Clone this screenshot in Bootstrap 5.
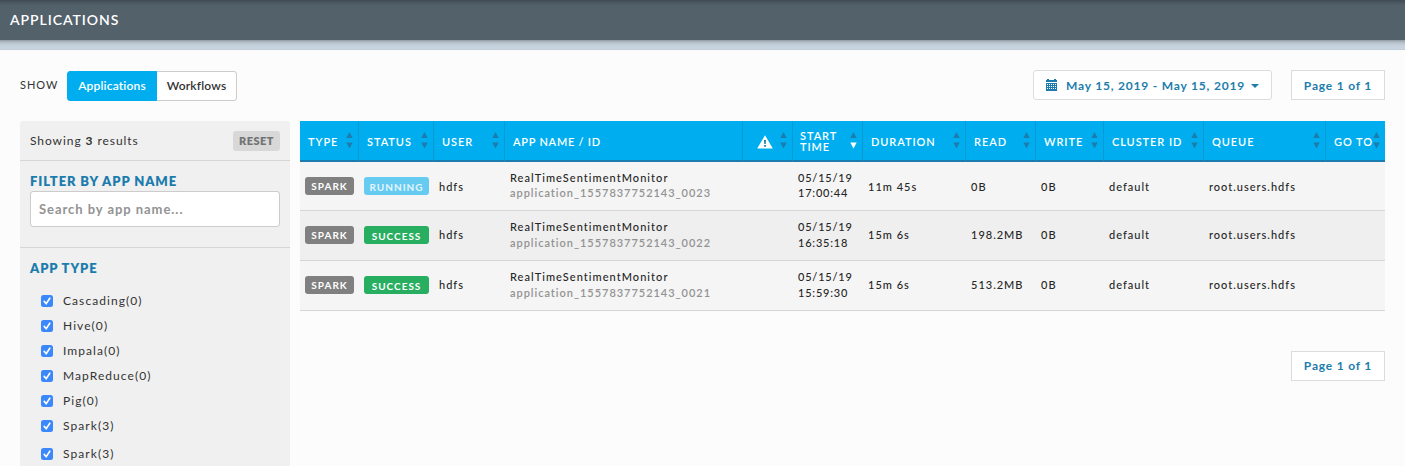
<!DOCTYPE html>
<html lang="en">
<head>
<meta charset="utf-8">
<title>Applications</title>
<meta name="viewport" content="width=device-width, initial-scale=1">
<link href="https://cdn.jsdelivr.net/npm/bootstrap@5.3.0/dist/css/bootstrap.min.css" rel="stylesheet">
<style>
html,body{height:100%;overflow:hidden}
body{font-family:Lato,"Open Sans",sans-serif;font-size:12px;letter-spacing:1px;line-height:15px;color:#333;background:#fcfcfc}
.topbar{height:40px;padding:0 10px 1px;background:linear-gradient(#3e4b54,#4c5963 3px,#53616b 6px);color:#fff;font-size:14px;font-weight:600;letter-spacing:.95px}
.substrip{height:10px;background:linear-gradient(#929ca4,#b4bfc8 25%,#c3d0db 50%,#c9d6e1 85%,#bccad6)}
.toolbar{height:71px;padding:20px 20px 0}
.show-label{font-size:11px;width:47px;line-height:30px}
.seg{margin-top:1px}
.seg .btn{height:30px;font-size:12px;font-weight:600;letter-spacing:.18px;line-height:28px;padding:0 8px;border-radius:3px;border:1px solid #ccc;color:#333;background:#fff}
.seg .btn.active{background:#00aeef;border-color:#00aeef;color:#fff;width:90px}
.seg .btn:last-child{width:81px}
.pager{width:94px;height:30px;border:1px solid #dcdcdc;background:#fff;color:#1c7cad;font-weight:700;letter-spacing:.8px}
.pager-top{margin-left:19px}
.pager-bottom{margin-top:40px;padding-bottom:2px}
.daterange{width:239px;height:30px;border:1px solid #dcdcdc;border-radius:3px;background:#fff;color:#1c7cad;font-weight:700;padding:0 12px;letter-spacing:.8px;white-space:nowrap}
.dr-text{width:180px;margin-left:9px}
.caret-down{margin:1px 0 0 5px}
.page-main{padding:0 20px;gap:10px}
.side{width:270px;height:345px;background:#f0f0f0;border-radius:3px 3px 0 0}
.side-sec{padding:0 10px}
.side-sec + .side-sec{padding-top:12px}
.sec-line{border-bottom:1px solid #d6d6d6}
.sec-top{height:40px}
.sec-filter{height:87px}
.side h2{font-size:13px;font-weight:800;line-height:16px;letter-spacing:.9px;color:#1c7cad;margin:0 0 2px}
.side h2.type-head{margin-bottom:12px}
.opt-list{margin-left:-10px}
.btn-reset{width:47px;height:20px;border:0;border-radius:3px;background:#d8d8d8;color:#737373;font-size:11px;font-weight:800;letter-spacing:.5px;line-height:20px;padding:0}
.search{height:36px;border:1px solid #ccc;border-radius:3px;font-size:13px;font-weight:700;letter-spacing:.95px;padding:0 8px;box-shadow:none}
.search::placeholder{color:#939393;opacity:1}
.count{letter-spacing:.93px}
.opt{height:25px;padding-left:21px;gap:10px;letter-spacing:1.07px}
.opt:last-child{margin-top:3px}
.tick{width:12px;height:12px;border-radius:2.5px;background:#3b88fd;flex:none}
.tick svg{display:block}
.apps{width:1085px;table-layout:fixed;margin:0;font-size:11px;border-collapse:separate;border-spacing:0;--bs-table-bg:transparent}
.apps th{height:41px;background:#00aeef;color:#fff;font-size:11px;font-weight:600;line-height:11px;letter-spacing:.93px;padding:2px 0 0 8px;border:0;border-right:1px solid #0999d3;border-bottom:2px solid #1c7cad;position:relative;white-space:nowrap;vertical-align:middle}
.apps th:last-child{border-right:0}
.apps th:nth-child(4){letter-spacing:.75px}
.apps th:nth-child(6){padding:0 0 0 7px}
.warn{display:block;margin-left:6px}
.sorter{position:absolute;right:5.5px;top:11px;width:7px;height:17px;fill:#1c7cad}
.apps td{height:50px;padding:0 0 2px 5px;border:0;border-bottom:1px solid #d6d6d6;background:#f5f5f5;color:#262626;line-height:16px;vertical-align:middle;white-space:nowrap;font-weight:500}
.apps tbody tr:first-child td{height:49px;line-height:15px}
.apps tbody tr:first-child td:not(:nth-child(4)):not(:nth-child(6)){padding-bottom:0}
.apps tbody tr:nth-child(2) td{background:#efefef}
.apps td:nth-child(4){letter-spacing:1.05px}
.apps td:nth-child(6){letter-spacing:.8px}
.app-id{color:#939393;font-weight:600;letter-spacing:.97px}
.pill{display:block;height:18px;border-radius:3px;color:#fff;font-size:10px;font-weight:700;line-height:19px;text-align:center;background:#808080;width:49px}
.pill.st{width:65px;line-height:21px}
.pill.run{background:#66cbf1;color:#e3f5fd}
.pill.ok{background:#27ae60}
</style>
</head>
<body>
<header class="topbar d-flex align-items-center">APPLICATIONS</header>
<div class="substrip"></div>
<div class="toolbar d-flex align-items-start">
  <div class="show-label">SHOW</div>
  <div class="btn-group seg"><button class="btn active">Applications</button><button class="btn">Workflows</button></div>
  <div class="daterange d-flex align-items-center ms-auto">
    <svg width="11" height="12" viewBox="0 0 11 12" shape-rendering="crispEdges"><path fill="#1c7cad" d="M0 1h1V0h2v1h5V0h2v1h1v2H0zM0 4h11v8H0z"/><path fill="#fff" d="M1 5h1v1H1zM3 5h1v1H3zM5 5h1v1H5zM7 5h1v1H7zM9 5h1v1H9zM1 7h1v1H1zM3 7h1v1H3zM5 7h1v1H5zM7 7h1v1H7zM9 7h1v1H9zM1 9h1v1H1zM3 9h1v1H3zM5 9h1v1H5zM7 9h1v1H7zM9 9h1v1H9z"/></svg>
    <span class="dr-text">May 15, 2019 - May 15, 2019</span>
    <svg class="caret-down" width="8" height="4" viewBox="0 0 8 4"><path fill="#1c7cad" d="M0 0h8L4 4z"/></svg>
  </div>
  <div class="pager pager-top d-flex align-items-center justify-content-center">Page 1 of 1</div>
</div>
<main class="page-main d-flex align-items-start">
  <aside class="side flex-shrink-0">
    <div class="side-sec sec-line sec-top d-flex align-items-center justify-content-between"><span class="count">Showing <b>3</b> results</span><button class="btn btn-reset">RESET</button></div>
    <div class="side-sec sec-line sec-filter"><h2>FILTER BY APP NAME</h2><input class="form-control search" placeholder="Search by app name..."></div>
    <div class="side-sec"><h2 class="type-head">APP TYPE</h2><div id="opts" class="opt-list"></div></div>
  </aside>
  <section>
    <table class="table apps">
      <colgroup><col style="width:59px"><col style="width:75px"><col style="width:71px"><col style="width:238px"><col style="width:50px"><col style="width:70px"><col style="width:103px"><col style="width:70px"><col style="width:68px"><col style="width:100px"><col style="width:122px"><col style="width:59px"></colgroup>
      <thead><tr id="heads"></tr></thead>
      <tbody id="rows"></tbody>
    </table>
    <div class="pager pager-bottom d-flex align-items-center justify-content-center ms-auto">Page 1 of 1</div>
  </section>
</main>
<script>
const opts = ["Cascading(0)","Hive(0)","Impala(0)","MapReduce(0)","Pig(0)","Spark(3)","Spark(3)"];
document.getElementById("opts").innerHTML = opts.map(o=>
  `<label class="opt d-flex align-items-center"><span class="tick"><svg width="12" height="12" viewBox="0 0 12 12"><path d="M3.2 6.4 5.2 8.6 8.8 3.2" fill="none" stroke="#fff" stroke-width="1.6" stroke-linecap="round"/></svg></span><span>${o}</span></label>`).join("");
const warn = '<svg class="warn" width="16" height="14" viewBox="0 0 16 14"><path fill="#fff" d="M8 .3 15.8 13.6H.2z"/><path fill="#1c7cad" d="M7 5h2l-.3 4H7.3zM7.1 10h1.8v1.8H7.1z"/></svg>';
const heads = ["TYPE","STATUS","USER","APP NAME / ID",warn,"START<br>TIME","DURATION","READ","WRITE","CLUSTER ID","QUEUE","GO TO"];
document.getElementById("heads").innerHTML = heads.map((h,i)=>
  `<th>${h}${i==3?'':`<svg class="sorter" viewBox="0 0 7 17"><path d="M3.5 0 6.7 6H.3z"/><path d="M3.5 16.5.3 10.5h6.4z"${i==5?' fill="#fff"':''}/></svg>`}</th>`).join("");
const rows = [["RUNNING","run","23","17:00:44","11m 45s","0B"],["SUCCESS","ok","22","16:35:18","15m 6s","198.2MB"],["SUCCESS","ok","21","15:59:30","15m 6s","513.2MB"]];
document.getElementById("rows").innerHTML = rows.map(r=>
  `<tr><td><span class="pill">SPARK</span></td><td><span class="pill st ${r[1]}">${r[0]}</span></td><td>hdfs</td><td>RealTimeSentimentMonitor<br><span class="app-id">application_1557837752143_00${r[2]}</span></td><td></td><td>05/15/19<br>${r[3]}</td><td>${r[4]}</td><td>${r[5]}</td><td>0B</td><td>default</td><td>root.users.hdfs</td><td></td></tr>`).join("");
</script>
<script src="https://cdn.jsdelivr.net/npm/bootstrap@5.3.0/dist/js/bootstrap.bundle.min.js"></script>
</body>
</html>
